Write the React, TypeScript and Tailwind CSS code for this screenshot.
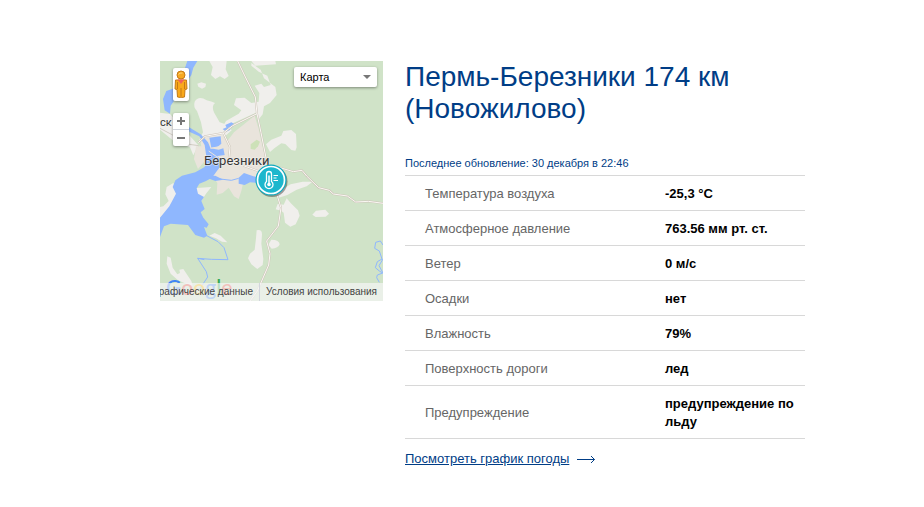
const readings = [
  { label: 'Температура воздуха',  value: '-25,3 °C' },
  { label: 'Атмосферное давление', value: '763.56 мм рт. ст.' },
  { label: 'Ветер',                value: '0 м/с' },
  { label: 'Осадки',               value: 'нет' },
  { label: 'Влажность',            value: '79%' },
  { label: 'Поверхность дороги',   value: 'лед' },
  { label: 'Предупреждение',       value: 'предупреждение по льду' },
]

const roads = [
  'M233 0L256 48L286 108L291 158L303 215L320 300L340 370L352 405L363 440L355 495L320 540L330 578L326 612L292 690L270 720',
  'M291 158L218 194L190 216L135 226L115 245',
  'M190 216L210 258L207 290',
  'M250 314L300 332L360 320L400 332L426 328L440 345L476 380L508 388L520 399L562 405L587 423L625 421L669 427',
]

function MapDrawing() {
  return (
    <svg viewBox="0 0 669 720" preserveAspectRatio="xMidYMid slice" className="block h-full w-full" aria-hidden="true">
      <rect width="669" height="720" fill="#d0e3c8" />

      {/* Open land */}
      <g fill="#f0efec">
        <path d="M148 0h52l-3 25 9 20-12 9-14-8-14 8-13-12 5-24z" />
        <path d="M112 68l12-4 14 4-2 10-10 5-11-6z" />
        <path d="M140 118q-24-16-36 4-5 16 7 28l12 34 6 30-14 28 20-10 60-6 20-18-12-16-24-8-16-28q-10-20 2-30-10-4-25-8z" />
        <path d="M232 0h42l12 14 62-4-2-10h-92zM274 6l28 20 10 26 34 26 4 24-20 24-18 10-4 24-14 18-4-24-70 32-30 8 8-14 38-22 8-10-22-16 6-20 26-2 20 16 22-4 2-26-14-22 20-6 8 10 20-6-10-28-26-12-22-18z" />
        <path d="M318 250l16-14 30-12 6-14 24-3 14 12 2 40-4 10-12-2-18-18-12-2-20 14-14 12z" />
        <path d="M0 155l30 4 60 66 25 28-15 30-10-24-50-20L0 206z" />
        <path d="M40 366l-20 12-4 22 10 20-16 16-10 2v32l50-38 20-30-20-14zM100 382l54-4-16 20-14 22-18 6-10-22z" />
        <path d="M148 524l16-8 18 8 20 20-16-2-18-10z" />
        <path d="M22 586l10 4 6 30 14 20 8-4-2-10 12-2 24 36 4 14-20-6-24-10-22-20-12-30z" />
        <path d="M290 508q16-4 16 12l-2 28 6 46-2 18-16 12-18-14-10-18 6-14 14-12 4-34z" />
        <path d="M334 536q24 0 25 14-4 12-24 13l-10-12z" />
        <path d="M352 394l40-24 36-8 30 0-18 14-30 10-28 16-26 8z" />
        <path d="M380 412l14 16 20 20 5 16-12 26-16 7-16-12-4-30-8-6-16-4 6-16 18 2z" />
        <path d="M468 449l28-3 11 12-10 9-30 1-10-7z" />
      </g>

      {/* Town */}
      <g fill="#e9e4dc">
        <path d="M120 232l68-10 14 18 20-26 62-50 12 40 20 90 20 30-36 34-48-4-8 36-8 24-14-8-16-26-18 16-18 5 2-35-20-30-20-30z" />
        <path d="M108 256l24 0 4 42-22 26-12-30z" />
      </g>
      <path d="M272 250l18-14 10 6-6 14-10 10-12-2z" fill="#cde1b8" />

      {/* Water */}
      <g fill="#8fb7fe">
        <path d="M82 0h30l-12 20-6 22-34 52-28 40-2 24-16-10-5-34 10-24 28-10 22-42z" />
        <path d="M86 198l36 22 22 24 10 24 26 26 4 18-16 22-12 16-18 10-20 8-8 14 4 16 18 10-8 12 10 24-12 10 8 16 16 20-6 10-8-2 10 26-10 6-26-8-22-30-52-4-20 8L0 528v-58l28-34 20-38-10-20 8-20 20-14 40-10 28-16 6-24-6-42-16-26-30-14z" />
        <path d="M148 230l34-4 2 22-12 10-18 2zM152 262l24 4 14-4 4 20-26 4-18-8z" />
        <path d="M146 346l20-2 24 12-24 4-16-6zM236 350l16-14 28 10 20 4-4 16-26-2-16 8-18-4z" />
        <path d="M196 192l18-8 10 6-10 10-14 0zM188 204l14-6 10 8-14 6z" />
      </g>
      <path d="M152 262l30-6M146 270l28 20" stroke="#e9e4dc" strokeWidth="3" />
      <path
        d="M164 352l50 6 22-6M140 524l34 18 18 18 12 36-50-1-41-3 26 40 4 16-24 36M113 592l20 4"
        fill="none" stroke="#8fb7fe" strokeWidth="3"
      />
      <path
        d="M669 552l-8-12-14 4-3 18 14 8 8 24-14 8-6 18 12 10 10 6-16 6-2 8 8 14M669 594l-12 20 12 22"
        fill="none" stroke="#8fb7fe" strokeWidth="3"
      />

      {/* Roads, a light line over a darker casing */}
      <g fill="none" strokeLinejoin="round">
        <path d="M0 202l38 20 50 28 28 4" stroke="#d3cec5" strokeWidth="3" />
        {roads.map(d => <path key={d} d={d} stroke="#cdc5ba" strokeWidth="6" />)}
        {roads.map(d => <path key={d} d={d} stroke="#fbf8f4" strokeWidth="3" />)}
      </g>

      <g fontFamily="Roboto, sans-serif" fill="#383838" stroke="#f4f2ee" strokeWidth="4" strokeOpacity="0.7" paintOrder="stroke">
        <text x="132" y="311" fontSize="39">Березники</text>
        <text x="0" y="194" fontSize="33">ск</text>
      </g>
    </svg>
  )
}

function Pegman() {
  return (
    <svg viewBox="0 0 16 30" className="h-[30px] w-4" aria-hidden="true">
      <g stroke="#c47a17" strokeWidth="1">
        <path d="M2.5 10h11l.5 9-2 .5-.5 7.5-3 .5-.5-1-.5 1-3-.5-.5-7.5-2-.5z" fill="#f9a91a" />
        <ellipse cx="8" cy="5" rx="4" ry="4" fill="#f6a821" />
      </g>
      <path d="M4.5 9.500h7L8 14z" fill="#f0625a" />
      <path d="M8 18v8M4.500 12v7M11.500 12v7" stroke="#c47a17" strokeWidth="1" />
      <path d="M5.500 4.500q1-2 4-1.500" stroke="#ffd77c" strokeWidth="1" fill="none" />
    </svg>
  )
}

function StationMarker() {
  return (
    <svg viewBox="0 0 36 36" className="h-9 w-9" aria-hidden="true">
      <circle cx="18" cy="18.5" r="15.5" fill="#000" opacity=".35" />
      <circle cx="17" cy="17" r="15.5" fill="#10a9bf" />
      <circle cx="17" cy="17" r="13.5" fill="#1cb7cd" stroke="#fff" strokeWidth="1.7" />
      <path d="M12.5 18.5V11a2.5 2.5 0 0 1 5 0v7.5a4 4 0 1 1-5 0z" fill="none" stroke="#fff" strokeWidth="1.3" />
      <path d="M15 12.5V21" stroke="#fff" strokeWidth="1.5" />
      <circle cx="15" cy="21.5" r="1.8" fill="#fff" />
      <path d="M19.5 12.5h4.500M19.5 15h3M19.5 17.500h4.500" stroke="#fff" strokeWidth="1.2" />
    </svg>
  )
}

function StationMap() {
  return (
    <section className="relative h-60 w-[223px] shrink-0 overflow-hidden" aria-label="Карта">
      <MapDrawing />

      {/* Street view and zoom */}
      <div className="absolute left-[13px] top-[7px] flex flex-col gap-3">
        <button className="flex h-[33px] w-4 items-center justify-center rounded-xs bg-white shadow-[0_1px_3px_rgba(0,0,0,0.4)]">
          <Pegman />
        </button>
        <div className="flex w-4 flex-col divide-y divide-gray-300 rounded-xs bg-white shadow-[0_1px_3px_rgba(0,0,0,0.4)]">
          <button className="flex h-[17px] items-center justify-center">
            <svg viewBox="0 0 8 8" className="h-2 w-2" aria-hidden="true"><path d="M4 0v8M0 4h8" stroke="#777" strokeWidth="2" /></svg>
          </button>
          <button className="flex h-4 items-center justify-center">
            <svg viewBox="0 0 8 8" className="h-2 w-2" aria-hidden="true"><path d="M0 4h8" stroke="#777" strokeWidth="2" /></svg>
          </button>
        </div>
      </div>

      {/* Map type */}
      <div className="absolute right-1.5 top-1.5">
        <select
          aria-label="Карта"
          className="block h-5 w-[83px] appearance-none rounded-xs bg-white pl-1.5 text-[11px] text-black shadow-[0_1px_3px_rgba(0,0,0,0.4)]"
        >
          <option>Карта</option>
        </select>
        <svg viewBox="0 0 8 4" className="pointer-events-none absolute right-1.5 top-2 h-1 w-2" aria-hidden="true">
          <path d="M0 0h8L4 4z" fill="#777" />
        </svg>
      </div>

      <button className="absolute left-[94px] top-[102px]">
        <StationMarker />
      </button>

      {/* Attribution */}
      <a href="#google" className="absolute bottom-0 left-1.5 flex font-[Lato,sans-serif] text-[21px] leading-7 font-medium">
        <span className="text-[#4285f4]">G</span>
        <span className="text-[#ea4335]">o</span>
        <span className="text-[#fbbc05]">o</span>
        <span className="text-[#4285f4]">g</span>
        <span className="text-[#34a853]">l</span>
        <span className="text-[#ea4335]">e</span>
      </a>
      <div className="absolute inset-x-0 bottom-0 flex justify-end bg-[#f5f5f5]/70 text-[10px] leading-[18px] whitespace-nowrap text-[#444]">
        <span className="px-1.5">Картографические данные</span>
        <a href="#terms" className="border-l border-gray-300 px-1.5">Условия использования</a>
      </div>
    </section>
  )
}

export default function App() {
  return (
    <main className="flex items-start gap-[22px] bg-white pt-[61px] pr-6 pb-10 pl-40 font-['Liberation_Sans',Arial,sans-serif]">
      <StationMap />

      <article className="max-w-[400px] flex-1">
        <h1 className="text-[28px] leading-8 text-[#003d86]">Пермь-Березники 174 км (Новожилово)</h1>
        <p className="mt-[30px] text-[11px] leading-4 text-[#003d86]">Последнее обновление: 30 декабря в 22:46</p>

        <table className="mt-1 w-full border-b border-[#d8d8d8] text-[13px] leading-[18px]">
          <tbody>
            {readings.map(({ label, value }) => (
              <tr key={label} className="border-t border-[#d8d8d8]">
                <th scope="row" className="w-3/5 pt-[9px] pb-[7px] pl-5 text-left font-normal text-[#666]">{label}</th>
                <td className="pt-[9px] pb-[7px] pl-5 font-bold text-black">{value}</td>
              </tr>
            ))}
          </tbody>
        </table>

        <a href="#chart" className="mt-[11px] inline-flex items-center gap-2 text-[13px] leading-[18px] text-[#003d86]">
          <span className="underline">Посмотреть график погоды</span>
          <svg viewBox="0 0 18 8" className="h-2 w-[18px]" fill="none" stroke="currentColor" aria-hidden="true">
            <path d="M0 4.5h17.5M14 1l3.5 3.5L14 8" />
          </svg>
        </a>
      </article>
    </main>
  )
}
